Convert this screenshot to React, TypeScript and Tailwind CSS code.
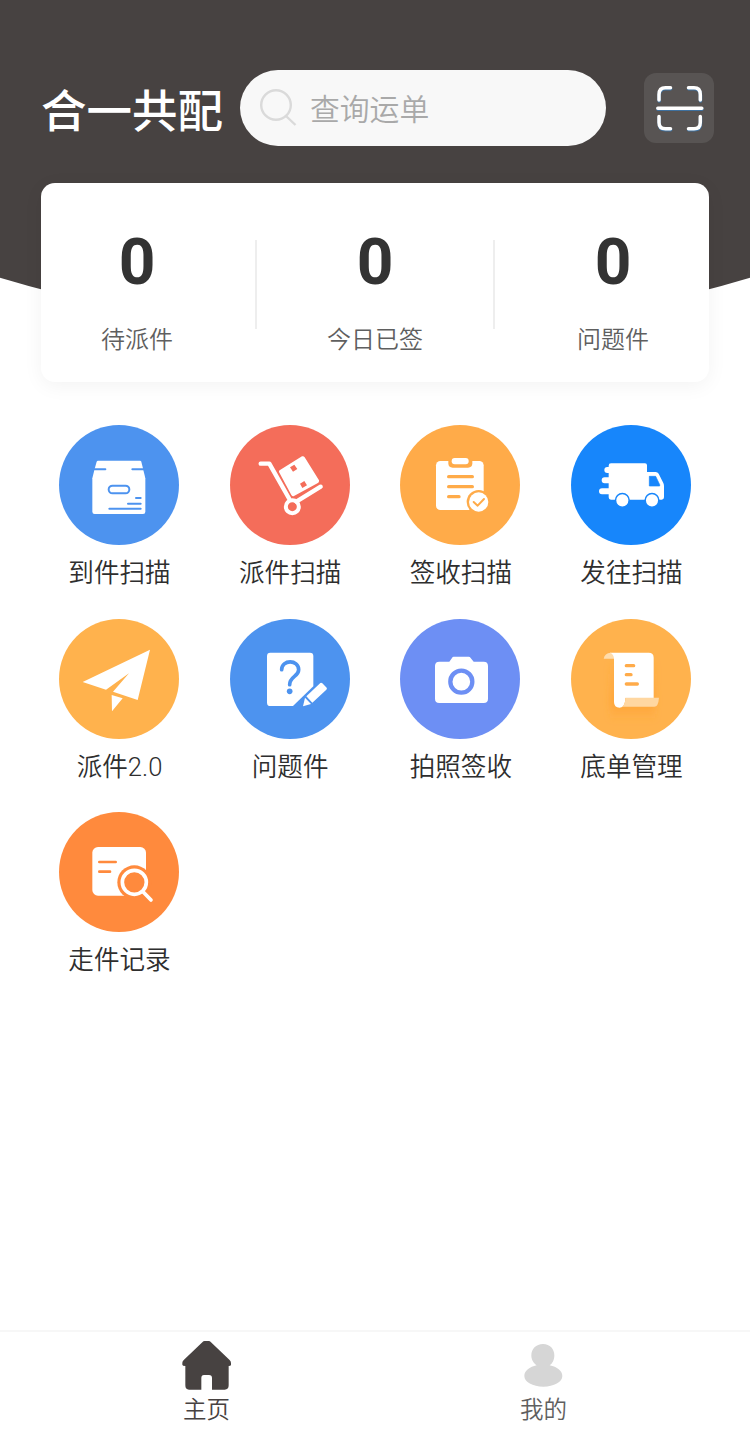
import React from 'react';

interface MenuItem {
  label: string;
  color: string;
  viewBox: string;
  icon: React.ReactNode;
}

const stats = [
  { label: '待派件', value: 0 },
  { label: '今日已签', value: 0 },
  { label: '问题件', value: 0 },
];

const menuItems: MenuItem[] = [
  {
    label: '到件扫描',
    color: 'bg-[#4d93ef]',
    viewBox: '28 30 360 360',
    icon: (
      <>
        <path d="M145 137H271Q274 137 275 140L281 165L287 190V290Q287 297 280 297H135Q128 297 128 290V190L134 165L141 140Q142 137 145 137Z" fill="#fff" />
        <g stroke="#4d93ef" strokeWidth="6" strokeLinecap="round" fill="none">
          <path d="M130 163H167M248 163H285" />
          <rect x="177" y="212" width="62" height="23" rx="11.5" />
          <path d="M259 249H273M235 266H273M179 281H273" />
        </g>
      </>
    ),
  },
  {
    label: '派件扫描',
    color: 'bg-[#f46d5a]',
    viewBox: '30 30 360 360',
    icon: (
      <>
        <path d="M122 146H148L208 252M229 260L302 215" stroke="#fff" strokeWidth="13" strokeLinecap="round" strokeLinejoin="round" fill="none" />
        <circle cx="217" cy="275" r="19.5" stroke="#fff" strokeWidth="12" fill="none" />
        <path d="M180 165L246 124Q251 122 254 127L297 196Q298 200 295 203L222 243Q217 245 214 240L177 171Q176 167 180 165Z" fill="#fff" />
        <path d="M210 157L223 149L232 162L219 170ZM240 206L253 198L261 211L247 219Z" fill="#f46d5a" />
      </>
    ),
  },
  {
    label: '签收扫描',
    color: 'bg-[#ffab49]',
    viewBox: '30 30 360 360',
    icon: (
      <>
        <rect x="138" y="138" width="143" height="147" rx="13" fill="#fff" />
        <path d="M175 133H247V145Q247 158 234 158H188Q175 158 175 145Z" fill="#ffab49" />
        <rect x="185" y="129" width="51" height="19" rx="9" fill="#fff" />
        <path d="M176 185H247M176 215H247M176 245H207" stroke="#ffab49" strokeWidth="10" strokeLinecap="round" />
        <circle cx="266" cy="261" r="36" fill="#ffab49" />
        <circle cx="266" cy="261" r="29" fill="#fff" />
        <path d="M251 261L263 272L282 252" stroke="#ffab49" strokeWidth="6" strokeLinecap="round" strokeLinejoin="round" fill="none" />
      </>
    ),
  },
  {
    label: '发往扫描',
    color: 'bg-[#1786fb]',
    viewBox: '33 30 360 360',
    icon: (
      <>
        <path d="M153 145H255Q261 145 261 151V171H287Q293 171 296 176L310 204Q312 208 312 213V247Q312 254 305 254H153Q146 254 146 247V152Q146 145 153 145Z" fill="#fff" />
        <path d="M142 165H160M134 196H160M126 229H160" stroke="#fff" strokeWidth="18" strokeLinecap="round" />
        <path d="M268 184H287L299 209V213H268Z" fill="#1786fb" stroke="#1786fb" strokeWidth="2" strokeLinejoin="round" />
        <circle cx="187" cy="256" r="20.5" fill="#fff" stroke="#1786fb" strokeWidth="4.5" />
        <circle cx="276" cy="256" r="20.5" fill="#fff" stroke="#1786fb" strokeWidth="4.5" />
      </>
    ),
  },
  {
    label: '派件2.0',
    color: 'bg-[#ffb24d]',
    viewBox: '28 25 360 360',
    icon: <path d="M301 117L264 268L190 243L238 188L169 237L99 214ZM186 253L219 263L187 302Z" fill="#fff" />,
  },
  {
    label: '问题件',
    color: 'bg-[#4d93ef]',
    viewBox: '30 25 360 360',
    icon: (
      <>
        <path d="M151 126H270Q280 126 280 136V227L219 286H151Q141 286 141 276V136Q141 126 151 126Z" fill="#fff" />
        <path d="M185 177C185 146 236 146 236 177C236 198 209 197 209 222" stroke="#4d93ef" strokeWidth="11" strokeLinecap="round" fill="none" />
        <circle cx="209" cy="242" r="8.5" fill="#4d93ef" />
        <path d="M301 217Q304 215 307 218L320 231Q322 234 319 237L277 276L259 257ZM255 261L273 280L249 287Z" fill="#fff" />
      </>
    ),
  },
  {
    label: '拍照签收',
    color: 'bg-[#6d8ff4]',
    viewBox: '30 25 360 360',
    icon: (
      <>
        <path d="M191 138H236Q240 138 242 142L251 153H281Q294 153 294 166V264Q294 277 281 277H148Q135 277 135 264V166Q135 153 148 153H178L186 142Q188 138 191 138Z" fill="#fff" />
        <circle cx="214" cy="213" r="33" stroke="#6d8ff4" strokeWidth="13" fill="none" />
      </>
    ),
  },
  {
    label: '底单管理',
    color: 'bg-[#ffb24d]',
    viewBox: '33 25 360 360',
    icon: (
      <>
        <defs>
          <linearGradient id="sheetShade" x1="0" y1="0" x2="0" y2="1">
            <stop offset="0" stopColor="#ff9d2b" stopOpacity="0.05" />
            <stop offset="0.7" stopColor="#ff9d2b" stopOpacity="0.6" />
            <stop offset="1" stopColor="#ff9d2b" stopOpacity="0" />
          </linearGradient>
          <filter id="sheetBlur" x="-30%" y="-30%" width="160%" height="160%">
            <feGaussianBlur stdDeviation="10" />
          </filter>
        </defs>
        <rect x="150" y="150" width="135" height="180" fill="url(#sheetShade)" filter="url(#sheetBlur)" />
        <path d="M131 144Q134 127 152 126Q163 130 162 144Z" fill="#ffdcab" />
        <path d="M150 126H266Q281 126 281 141V262H196Q196 291 179 291Q162 291 162 274V146Q162 131 150 126Z" fill="#fff" />
        <path d="M196 261H297Q295 288 283 288H187Q196 279 196 261Z" fill="#ffd7a1" />
        <path d="M199 165H221M199 192H213M199 220H232" stroke="#ffab49" strokeWidth="10" strokeLinecap="round" />
      </>
    ),
  },
  {
    label: '走件记录',
    color: 'bg-[#ff8a3d]',
    viewBox: '28 37 360 360',
    icon: (
      <>
        <rect x="128" y="142" width="161" height="146" rx="17" fill="#fff" />
        <path d="M149 187H198M149 216H181" stroke="#ff8a3d" strokeWidth="8" strokeLinecap="round" />
        <circle cx="254" cy="248" r="51" fill="#ff8a3d" />
        <path d="M280 275L302 299" stroke="#ff8a3d" strokeWidth="20" />
        <circle cx="254" cy="248" r="36" stroke="#fff" strokeWidth="11" fill="none" />
        <path d="M280 276L304 301" stroke="#fff" strokeWidth="11" strokeLinecap="round" />
      </>
    ),
  },
];

const SearchIcon = () => (
  <svg className="h-[38px] w-[38px]" viewBox="0 0 38 38" fill="none" stroke="#dadada" strokeWidth="2.4">
    <circle cx="17" cy="16" r="14.8" />
    <path d="M27 27L36.5 36" />
  </svg>
);

const scanPath =
  'M15 27V21.5Q15 14.8 21.5 14.8H26.5M44.5 14.8H50Q56.3 14.8 56.3 21.5V27M15 43.5V49.5Q15 55.8 21.5 55.8H26.5M44.5 55.8H50Q56.3 55.8 56.3 49.5V43.5M13.8 35.2H57.8';

const ScanIcon = () => (
  <svg className="h-[70px] w-[70px]" viewBox="0 0 70 70" fill="none" strokeWidth="3.5" strokeLinecap="round">
    <path d={scanPath} stroke="#3f719f" transform="translate(0.2 1)" />
    <path d={scanPath} stroke="#fff" />
  </svg>
);

const Header = () => (
  <header className="relative flex h-[146px] items-end pl-[41px]">
    <h1 className="mb-[13px] w-[199px] whitespace-nowrap text-[45.5px] font-medium leading-[50px] text-white">合一共配</h1>
    <div className="flex h-[76px] w-[366px] items-center rounded-full bg-[#f8f8f8] pl-[19px]">
      <SearchIcon />
      <span className="ml-[13px] text-[29.8px] font-[350] leading-none text-[#a9a9a9]">查询运单</span>
    </div>
    <button className="mb-[3px] ml-[38px] h-[70px] w-[70px] rounded-[12px] bg-[#585453]">
      <ScanIcon />
    </button>
  </header>
);

const StatsCard = () => (
  <section className="relative mx-[41px] mt-[37px] flex h-[199px] rounded-[14px] bg-white shadow-[0_4px_20px_rgba(0,0,0,0.05)]">
    {stats.map((stat, i) => (
      <React.Fragment key={stat.label}>
        {i > 0 && <div className="mx-[22px] mt-[57px] h-[89px] w-[2px] bg-[#eeeeee]" />}
        <div className="flex w-[192px] flex-col items-center pt-[47px]">
          <span className="font-['Roboto'] text-[64px] font-bold leading-[66px] text-[#333333]">{stat.value}</span>
          <span className="mt-[26px] text-[24px] font-[350] leading-[32px] text-[#5f5f5f]">{stat.label}</span>
        </div>
      </React.Fragment>
    ))}
  </section>
);

const TabBar = () => (
  <nav className="flex h-[100px] border-t-2 border-[#f7f7f7] bg-white pl-[38px] pr-[38px]">
    <button className="flex flex-1 flex-col items-center pt-[9px] text-[#474241]">
      <svg className="h-[49px] w-[50px]" viewBox="96 63 150 147" fill="#474241">
        <path d="M164 63H176Q180 63 183 67L238 119Q243 123 243 129V134Q243 138 236 138V196Q236 209 224 209H186V174Q186 165 177 165H162Q154 165 154 174V209H117Q106 209 106 196V138Q97 138 97 134V128Q97 123 102 119L157 67Q160 63 164 63Z" />
      </svg>
      <span className="mt-[2px] text-[23.5px] font-[350] leading-[32px]">主页</span>
    </button>
    <button className="flex flex-1 flex-col items-center pt-[9px] text-[#5f5f5f]">
      <svg className="h-[49px] w-[50px]" viewBox="1106 63 150 147" fill="#d6d6d6">
        <path d="M1178 72C1199 72 1212 87 1212 106C1212 120 1206 131 1198 136C1220 140 1236 153 1236 168C1236 186 1211 200 1179 200C1147 200 1122 186 1122 168C1122 153 1138 140 1159 136C1150 130 1143 120 1143 106C1143 87 1157 72 1178 72Z" />
      </svg>
      <span className="mt-[2px] text-[23.5px] font-[350] leading-[32px]">我的</span>
    </button>
  </nav>
);

export default function App() {
  return (
    <div className="relative flex h-[1430px] w-[750px] flex-col overflow-hidden bg-white font-['Noto_Sans_CJK_SC',sans-serif]">
      {/* Curved dark backdrop behind the header and the card */}
      <div className="absolute inset-x-0 top-0 h-[340px] bg-[#474241] [clip-path:circle(1300px_at_50%_-967px)]" />

      <Header />
      <StatsCard />

      <main className="mt-[43px] grid grid-cols-4 gap-y-[33.7px] px-[33.7px]">
        {menuItems.map((item) => (
          <button key={item.label} className="flex h-[160px] flex-col items-center">
            <div className={`h-[120px] w-[120px] shrink-0 rounded-full ${item.color}`}>
              <svg className="h-full w-full" viewBox={item.viewBox}>
                {item.icon}
              </svg>
            </div>
            <span className="mt-[11px] pl-px font-['Roboto','Noto_Sans_CJK_SC',sans-serif] text-[25.6px] font-[350] leading-[34px] text-[#2e2e2e]">
              {item.label}
            </span>
          </button>
        ))}
      </main>

      <div className="flex-1" />
      <TabBar />
    </div>
  );
}
